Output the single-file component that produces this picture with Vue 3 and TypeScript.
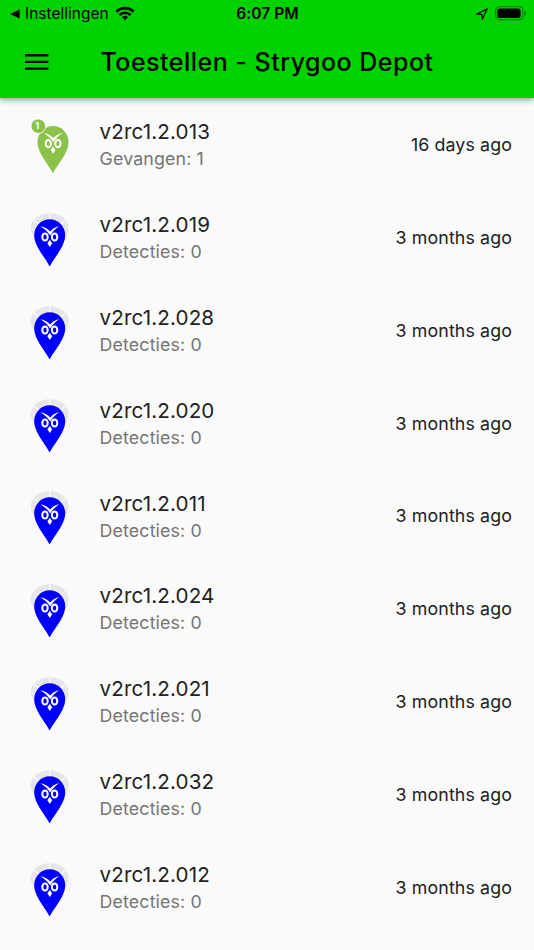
<script setup lang="ts">
interface Device {
  name: string
  label: string
  count: number
  seen: string
  caught: boolean
}

const idle = (id: string): Device => ({
  name: `v2rc1.2.${id}`,
  label: 'Detecties',
  count: 0,
  seen: '3 months ago',
  caught: false,
})

const devices: Device[] = [
  { name: 'v2rc1.2.013', label: 'Gevangen', count: 1, seen: '16 days ago', caught: true },
  ...['019', '028', '020', '011', '024', '021', '032', '012'].map(idle),
]
</script>

<template>
  <div class="screen">
    <header class="header">
      <div class="status">
        <div class="back">
          <svg class="back-arrow" viewBox="0 0 10 10"><path d="M0 5 9.6.5v9z" /></svg>
          <span class="back-label">Instellingen</span>
          <svg class="wifi" viewBox="0 0 20 15">
            <path d="M1.4 5.7a12.2 12.2 0 0 1 17.2 0M4.5 9a7.8 7.8 0 0 1 11 0" fill="none" stroke="#000" stroke-width="2.7" />
            <path d="M10 14.3 7 11.3a4.3 4.3 0 0 1 6 0z" />
          </svg>
        </div>
        <div class="time">6:07 PM</div>
        <div class="indicators">
          <svg class="location" viewBox="0 0 12 12">
            <path d="M.7 6.1 11.3.7 6.3 11.3 5.8 6.3z" fill="none" stroke="#000" stroke-width="1.2" stroke-linejoin="round" />
          </svg>
          <svg class="battery" viewBox="0 0 32 15">
            <rect x=".7" y=".7" width="27.2" height="13.2" rx="3.6" fill="none" stroke="#000" stroke-opacity=".45" />
            <rect x="2.4" y="2.5" width="23.2" height="9.6" rx="2.2" />
            <path d="M29.4 4.8c2.2.8 2.2 4.2 0 5z" fill-opacity=".5" />
          </svg>
        </div>
      </div>
      <div class="toolbar">
        <svg class="menu" viewBox="0 0 24 16"><path d="M0 0h23.4v2.4H0zM0 6.7h23.4v2.4H0zM0 13.4h23.4v2.4H0z" /></svg>
        <h1 class="title">Toestellen - Strygoo Depot</h1>
      </div>
    </header>
    <main class="list">
      <div v-for="device in devices" :key="device.name" class="row">
        <svg class="marker" :class="{ caught: device.caught }" viewBox="0 0 46 60">
          <g v-if="!device.caught">
            <path d="M5.4 28.5C1.5 23 2.2 17 5.3 12.6 9.2 7.4 15.2 5.2 21.7 5.2S34.2 7.4 38.1 12.6C41.2 17 41.9 23 38 28.5z" fill="#e6e6e6" />
            <path d="M21.7 4v9M5.9 12.2l7 6M37.5 12.2l-7 6" fill="none" stroke="#fafafa" stroke-width="1.4" />
          </g>
          <g :transform="device.caught ? 'translate(3.3 -.3)' : undefined">
            <path class="pin" d="M21.7 58.6C18.5 51.2 6.2 38.8 6.2 27.2A15.5 15.9 0 0 1 37.2 27.2C37.2 38.8 24.9 51.2 21.7 58.6z" />
            <path d="M12.6 18.2C16.6 19.2 20 20.8 22.2 23.4 24 20.9 27 19 31.4 18 27.5 20.8 24.6 23.6 22.2 27.4 19.8 23.8 17 21.2 12.6 18.2z" fill="#fff" />
            <ellipse cx="17" cy="29" rx="2.7" ry="3.6" fill="none" stroke="#fff" stroke-width="2" />
            <ellipse cx="26.6" cy="29" rx="2.7" ry="3.6" fill="none" stroke="#fff" stroke-width="2" />
            <path d="M21.8 31.8 24.2 35.2 21.8 39 19.4 35.2z" fill="#fff" />
          </g>
          <g v-if="device.caught">
            <circle cx="10.3" cy="11.2" r="7.3" fill="#8bc34a" stroke="#fafafa" stroke-width=".9" />
            <text x="7.3" y="14.3" class="badge">{{ device.count }}</text>
          </g>
        </svg>
        <div class="info">
          <div class="name">{{ device.name }}</div>
          <div class="detail">{{ device.label }}: {{ device.count }}</div>
        </div>
        <div class="seen">{{ device.seen }}</div>
      </div>
    </main>
  </div>
</template>

<style>
body {
  margin: 0;
  background: #fafafa;
}
</style>

<style scoped>
.screen {
  width: 534px;
  height: 950px;
  overflow: hidden;
  background: #fafafa;
  color: #212121;
  font-family: Inter, "Liberation Sans", sans-serif;
}
.header {
  position: relative;
  height: 98px;
  background: #00d200;
  color: #000;
  box-shadow: 0 3px 6px rgba(0, 0, 0, 0.25), 0 1px 3px rgba(0, 0, 0, 0.14);
}
.status {
  display: grid;
  grid-template-columns: 1fr auto 1fr;
  align-items: center;
  height: 27px;
  padding: 0 7px 0 10px;
}
.back {
  display: flex;
  align-items: center;
}
.back-arrow {
  width: 10px;
  height: 10px;
  margin-right: 5px;
}
.back-label {
  font-size: 15.4px;
  line-height: 20px;
  letter-spacing: 0.05px;
}
.wifi {
  width: 20px;
  height: 15px;
  margin-left: 6px;
}
.time {
  margin-right: 2px;
  font-size: 15.6px;
  font-weight: 600;
  line-height: 20px;
  letter-spacing: 0.05px;
}
.indicators {
  display: flex;
  align-items: center;
  justify-content: flex-end;
}
.location {
  width: 12px;
  height: 12px;
  margin-right: 7px;
}
.battery {
  width: 32px;
  height: 15px;
}
.toolbar {
  display: flex;
  align-items: center;
  height: 70px;
  padding-left: 25px;
}
.menu {
  width: 24px;
  height: 16px;
  margin-right: 51.5px;
}
.title {
  margin: 0;
  font-size: 25px;
  font-weight: 500;
  line-height: 32px;
  letter-spacing: 0.48px;
  white-space: nowrap;
}
.list {
  padding-top: 0.7px;
}
.row {
  display: flex;
  align-items: center;
  box-sizing: border-box;
  height: 92.85px;
  padding: 0 22px 0 28px;
}
.marker {
  flex: none;
  width: 46px;
  height: 60px;
  margin-right: 25.6px;
}
.pin {
  fill: #00f;
}
.caught .pin {
  fill: #8bc34a;
}
.badge {
  fill: #fff;
  font-size: 9px;
  font-weight: 700;
}
.info {
  flex: 1;
  padding-top: 1px;
}
.name {
  font-size: 20.6px;
  line-height: 27px;
  letter-spacing: 0.13px;
}
.detail {
  color: #757575;
  font-size: 17.8px;
  line-height: 27.8px;
  letter-spacing: 0.14px;
}
.seen {
  font-size: 17.8px;
  line-height: 26px;
  letter-spacing: 0.12px;
}
</style>
